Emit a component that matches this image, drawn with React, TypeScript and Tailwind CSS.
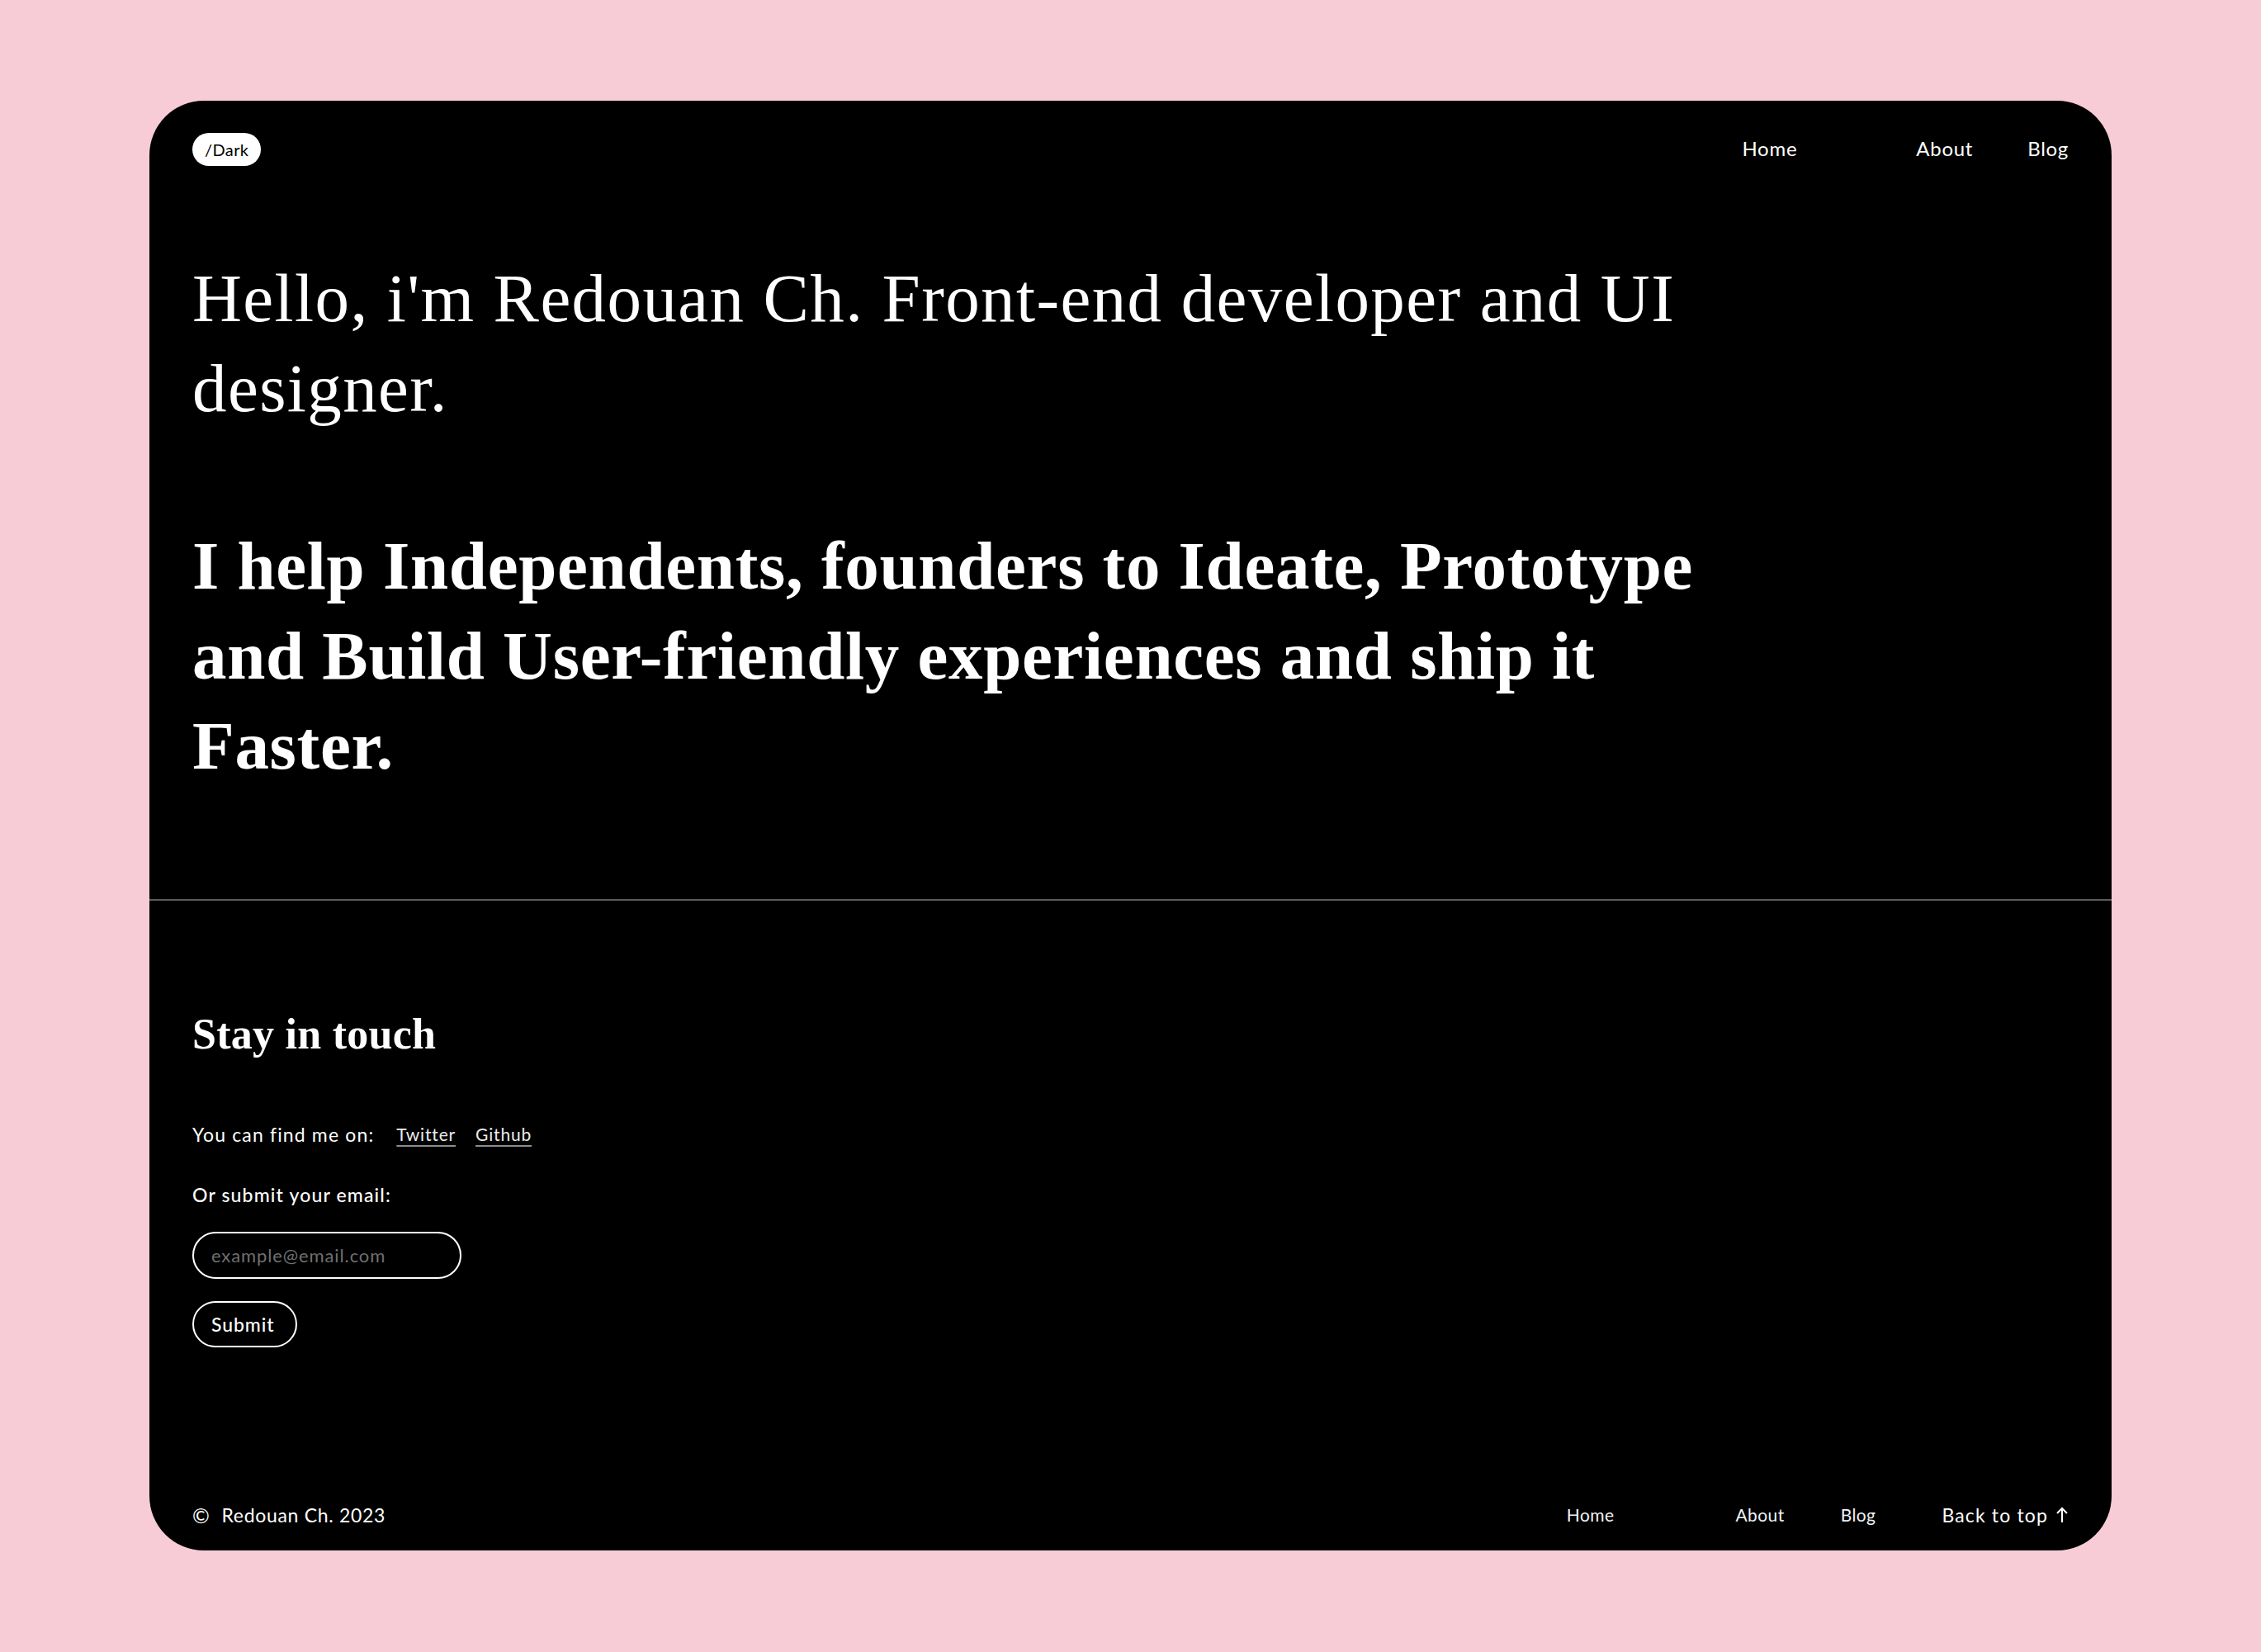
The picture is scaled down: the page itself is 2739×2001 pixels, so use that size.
import React from "react";

const sans = "font-['Lato','Noto_Sans',sans-serif]";
const serif = "font-['Liberation_Serif','Times_New_Roman',serif]";

export default function App() {
  return (
    <div className={`min-h-screen w-full bg-[#f7ccd6] px-[181px] py-[122px] ${sans}`}>
      <div className="flex h-[1756px] flex-col overflow-hidden rounded-[66px] bg-black text-white">
        {/* Header */}
        <header className="flex items-center justify-between px-[52px] pt-[39px]">
          <button className="flex h-[40px] items-center rounded-full bg-white px-[15px] text-[20px] leading-none tracking-[0.02em] text-black">
            /Dark
          </button>
          <nav className="-mt-[2px] flex items-center text-[24px] leading-none tracking-[0.03em]">
            <a href="#" className="text-white">Home</a>
            <a href="#" className="ml-[144px] text-white">About</a>
            <a href="#" className="ml-[66px] text-white">Blog</a>
          </nav>
        </header>

        {/* Hero */}
        <section className={`px-[52px] pt-[106px] ${serif}`}>
          <div className="max-w-[1900px] text-[83px] leading-[109px]">
            <p className="font-normal tracking-[1.4px]">
              Hello, i'm Redouan Ch. Front-end developer and UI designer.
            </p>
            <p className="mt-[106px] font-bold tracking-[0.7px]">
              I help Independents, founders to Ideate, Prototype and Build User-friendly experiences and ship it Faster.
            </p>
          </div>
        </section>

        <div className="mt-[131px] h-[2px] w-full bg-[#5c5c5c]" />

        {/* Stay in touch */}
        <section className="px-[52px] pt-[137px]">
          <h2 className={`${serif} text-[52px] font-bold leading-[50px] tracking-[0.005em]`}>Stay in touch</h2>
          <div className="mt-[82px] flex items-center text-[23px] leading-[28px]">
            <span className="tracking-[0.05em]">You can find me on:</span>
            <a href="#" className="ml-[27px] text-[21px] tracking-[0.04em] text-[#ececec] underline decoration-[#8c8c8c] decoration-[2px] underline-offset-[5px]">
              Twitter
            </a>
            <a href="#" className="ml-[24px] text-[21px] tracking-[0.04em] text-[#ececec] underline decoration-[#8c8c8c] decoration-[2px] underline-offset-[5px]">
              Github
            </a>
          </div>
          <p className="mt-[45px] text-[23px] font-medium leading-[28px] tracking-[0.05em]">Or submit your email:</p>
          <form className="mt-[31px] flex flex-col items-start gap-[27px]" onSubmit={(e) => e.preventDefault()}>
            <input
              type="email"
              placeholder="example@email.com"
              className="h-[57px] w-[326px] rounded-full border-2 border-white bg-black pl-[21px] text-[22px] tracking-[0.04em] text-white outline-none placeholder:text-[#707070]"
            />
            <button
              type="submit"
              className="flex h-[56px] w-[127px] items-center rounded-full border-2 border-white bg-black pl-[21px] text-[23px] font-medium tracking-[0.04em] text-white"
            >
              Submit
            </button>
          </form>
        </section>

        {/* Footer */}
        <footer className="mt-auto flex items-center justify-between px-[52px] pb-[29px]">
          <div className="flex items-center text-[23px] leading-[28px] tracking-[0.03em]">
            <span className="text-[25px]">©</span>
            <span className="ml-[14px]">Redouan Ch. 2023</span>
          </div>
          <div className="flex items-center text-[21px] leading-[28px] tracking-[0.02em]">
            <a href="#" className="text-[#eef3f7]">Home</a>
            <a href="#" className="ml-[147px] text-[#eef3f7]">About</a>
            <a href="#" className="ml-[68px] text-[#eef3f7]">Blog</a>
            <a href="#" className="ml-[80px] flex items-center text-[23px] tracking-[0.05em] text-white">
              Back to top
              <svg width="16" height="20" viewBox="0 0 16 20" className="ml-[9px]" fill="none" stroke="currentColor" strokeWidth="2">
                <path d="M8 19V2" />
                <path d="M2 8l6-6 6 6" />
              </svg>
            </a>
          </div>
        </footer>
      </div>
    </div>
  );
}
